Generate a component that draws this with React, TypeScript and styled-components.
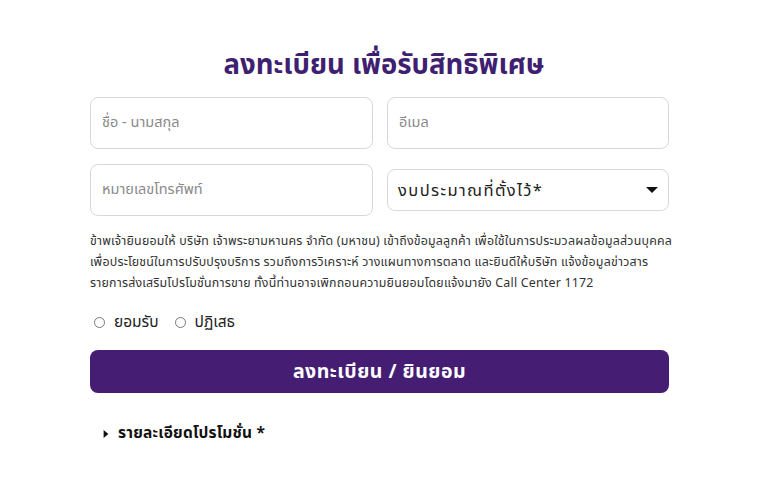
import React from "react";
import styled, { createGlobalStyle } from "styled-components";

const Global = createGlobalStyle`
  html, body { margin: 0; padding: 0; background: #fff; }
  body { font-family: "Noto Sans Thai", "Noto Sans", "Open Sans", sans-serif; color: #333; }
  * { box-sizing: border-box; }
`;

const Page = styled.div`
  width: 768px;
  display: flex;
  flex-direction: column;
  padding-top: 48px;
`;

const Title = styled.h1`
  margin: 0 0 13px;
  text-align: center;
  font-size: 27.5px;
  line-height: 36px;
  font-weight: 700;
  color: #3f1f70;
`;

const Form = styled.div`
  width: 579px;
  margin-left: 90px;
  display: flex;
  flex-direction: column;
`;

const Grid = styled.div`
  display: grid;
  grid-template-columns: 283px 282px;
  column-gap: 14px;
  row-gap: 15px;
  align-items: center;
`;

const Input = styled.div`
  height: 52px;
  border: 1px solid #d8d8d8;
  border-radius: 8px;
  padding: 0 11px;
  display: flex;
  align-items: center;
  font-size: 14.5px;
  color: #8a8a8a;
`;

const Select = styled.div`
  height: 42px;
  border: 1px solid #d8d8d8;
  border-radius: 8px;
  padding: 0 10px 0 10px;
  display: flex;
  align-items: center;
  justify-content: space-between;
  font-size: 16.5px;
  letter-spacing: 1.4px;
  color: #222;
`;

const Consent = styled.p`
  margin: 15px 0 0;
  font-size: 12.4px;
  letter-spacing: 0.2px;
  line-height: 21px;
  color: #333;
  white-space: nowrap;
`;

const Radios = styled.div`
  display: flex;
  align-items: center;
  gap: 16px;
  margin-top: 17px;
  padding-left: 4px;
  font-size: 15.5px;
  color: #222;
`;

const RadioItem = styled.label`
  display: flex;
  align-items: center;
  gap: 9px;
`;

const Circle = styled.span`
  width: 11px;
  height: 11px;
  border: 1px solid #777;
  border-radius: 50%;
  display: inline-block;
`;

const Button = styled.div`
  margin-top: 16px;
  height: 43px;
  border-radius: 8px;
  background: #451e73;
  color: #fff;
  font-size: 19.5px;
  letter-spacing: 0.5px;
  font-weight: 700;
  display: flex;
  align-items: center;
  justify-content: center;
`;

const Details = styled.div`
  margin-top: 29px;
  padding-left: 12px;
  display: flex;
  align-items: center;
  gap: 8px;
  font-size: 15.5px;
  letter-spacing: 0.2px;
  font-weight: 700;
  color: #111;
`;

const Arrow = ({ size = 8 }: { size?: number }) => (
  <svg width={size} height={size} viewBox="0 0 10 10">
    <path d="M2 0 L8 5 L2 10 Z" fill="#111" />
  </svg>
);

export default function App() {
  return (
    <>
      <Global />
      <Page>
        <Title>ลงทะเบียน เพื่อรับสิทธิพิเศษ</Title>
        <Form>
          <Grid>
            <Input>ชื่อ - นามสกุล</Input>
            <Input>อีเมล</Input>
            <Input>หมายเลขโทรศัพท์</Input>
            <Select>
              <span>งบประมาณที่ตั้งไว้*</span>
              <svg width="12" height="8" viewBox="0 0 12 8">
                <path d="M0 1 L12 1 L6 7 Z" fill="#111" />
              </svg>
            </Select>
          </Grid>
          <Consent>
            ข้าพเจ้ายินยอมให้ บริษัท เจ้าพระยามหานคร จำกัด (มหาชน) เข้าถึงข้อมูลลูกค้า เพื่อใช้ในการประมวลผลข้อมูลส่วนบุคคล
            <br />
            เพื่อประโยชน์ในการปรับปรุงบริการ รวมถึงการวิเคราะห์ วางแผนทางการตลาด และยินดีให้บริษัท แจ้งข้อมูลข่าวสาร
            <br />
            รายการส่งเสริมโปรโมชั่นการขาย ทั้งนี้ท่านอาจเพิกถอนความยินยอมโดยแจ้งมายัง Call Center 1172
          </Consent>
          <Radios>
            <RadioItem><Circle />ยอมรับ</RadioItem>
            <RadioItem><Circle />ปฏิเสธ</RadioItem>
          </Radios>
          <Button>ลงทะเบียน / ยินยอม</Button>
          <Details>
            <Arrow />
            รายละเอียดโปรโมชั่น *
          </Details>
        </Form>
      </Page>
    </>
  );
}
